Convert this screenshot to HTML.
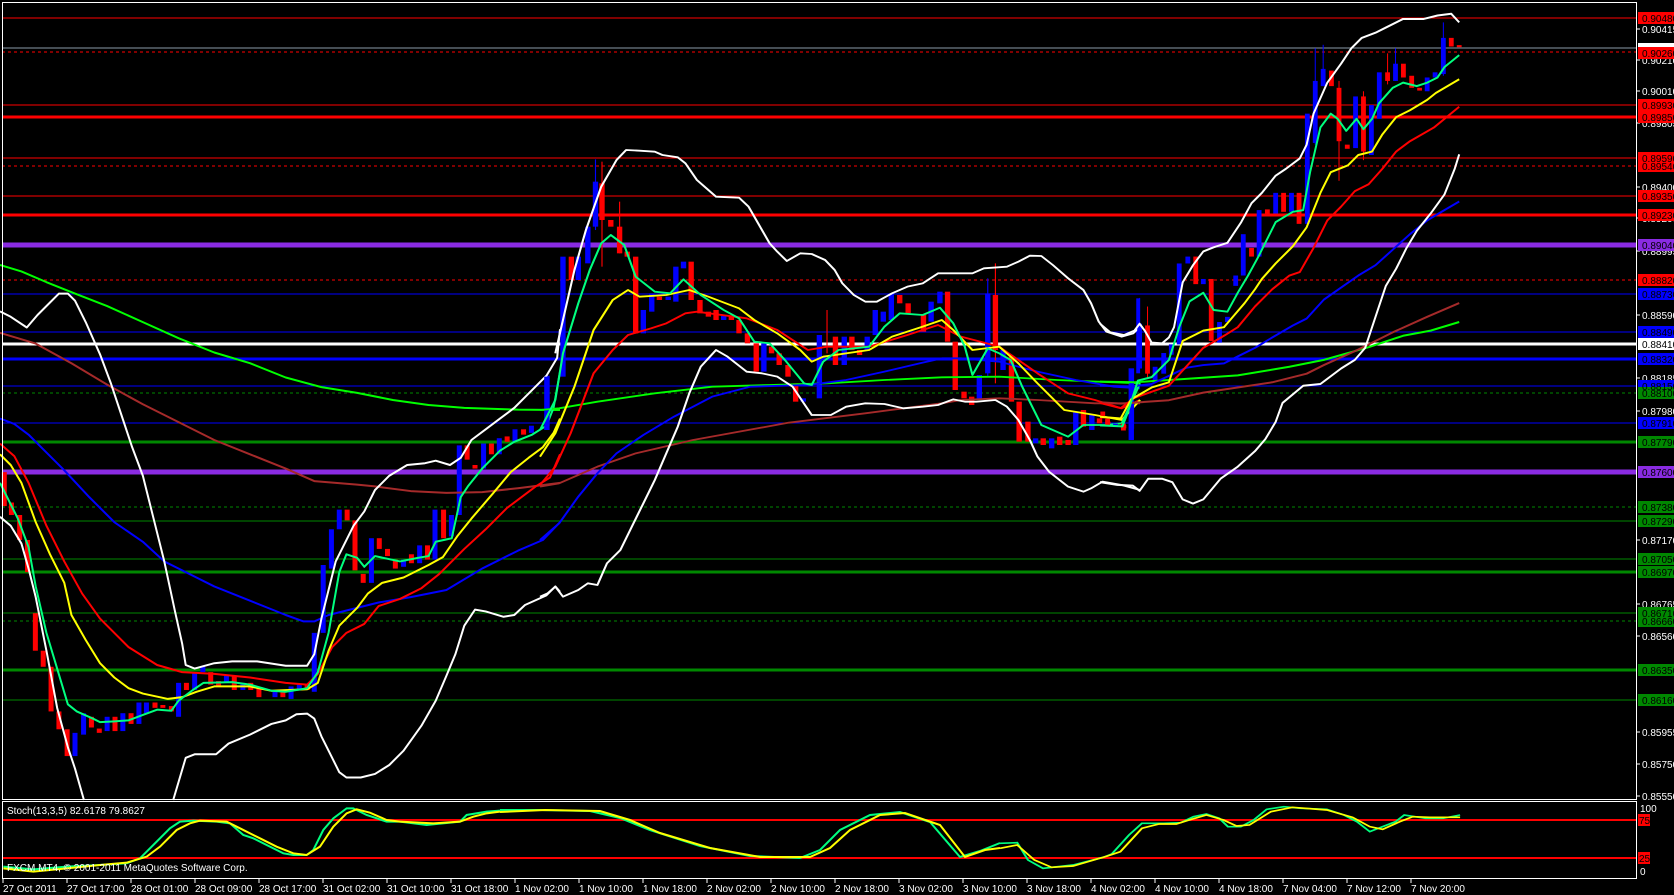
<!DOCTYPE html>
<html><head><meta charset="utf-8"><style>
html,body{margin:0;padding:0;background:#000;width:1674px;height:895px;overflow:hidden}
svg{position:absolute;left:0;top:0}
text{font-family:"Liberation Sans",sans-serif;font-size:10px}
</style></head><body>
<svg width="1674" height="895" viewBox="0 0 1674 895" xmlns="http://www.w3.org/2000/svg">
<rect width="1674" height="895" fill="#000"/>
<g shape-rendering="crispEdges">
<line x1="2" x2="1636" y1="18" y2="18" stroke="#f00" stroke-width="1"/>
<line x1="2" x2="1636" y1="48" y2="48" stroke="#8a9aa8" stroke-width="1"/>
<line x1="2" x2="1636" y1="52" y2="52" stroke="#f00" stroke-width="1" stroke-dasharray="3,3"/>
<line x1="2" x2="1636" y1="105" y2="105" stroke="#f00" stroke-width="1"/>
<line x1="2" x2="1636" y1="117" y2="117" stroke="#f00" stroke-width="3"/>
<line x1="2" x2="1636" y1="158" y2="158" stroke="#f00" stroke-width="1"/>
<line x1="2" x2="1636" y1="166" y2="166" stroke="#f00" stroke-width="1" stroke-dasharray="3,3"/>
<line x1="2" x2="1636" y1="196" y2="196" stroke="#f00" stroke-width="1"/>
<line x1="2" x2="1636" y1="215" y2="215" stroke="#f00" stroke-width="3"/>
<line x1="2" x2="1636" y1="245" y2="245" stroke="#8a2be2" stroke-width="5"/>
<line x1="2" x2="1636" y1="280" y2="280" stroke="#f00" stroke-width="1" stroke-dasharray="3,3"/>
<line x1="2" x2="1636" y1="294" y2="294" stroke="#00f" stroke-width="1"/>
<line x1="2" x2="1636" y1="332" y2="332" stroke="#00f" stroke-width="1"/>
<line x1="2" x2="1636" y1="344" y2="344" stroke="#fff" stroke-width="3"/>
<line x1="2" x2="1636" y1="359" y2="359" stroke="#00f" stroke-width="3"/>
<line x1="2" x2="1636" y1="386" y2="386" stroke="#00f" stroke-width="1"/>
<line x1="2" x2="1636" y1="393" y2="393" stroke="#080" stroke-width="1" stroke-dasharray="3,3"/>
<line x1="2" x2="1636" y1="423" y2="423" stroke="#00f" stroke-width="1"/>
<line x1="2" x2="1636" y1="442" y2="442" stroke="#080" stroke-width="3"/>
<line x1="2" x2="1636" y1="472" y2="472" stroke="#8a2be2" stroke-width="5"/>
<line x1="2" x2="1636" y1="507" y2="507" stroke="#080" stroke-width="1" stroke-dasharray="3,3"/>
<line x1="2" x2="1636" y1="521" y2="521" stroke="#080" stroke-width="1"/>
<line x1="2" x2="1636" y1="559" y2="559" stroke="#080" stroke-width="1"/>
<line x1="2" x2="1636" y1="572" y2="572" stroke="#080" stroke-width="3"/>
<line x1="2" x2="1636" y1="613" y2="613" stroke="#080" stroke-width="1"/>
<line x1="2" x2="1636" y1="621" y2="621" stroke="#080" stroke-width="1" stroke-dasharray="3,3"/>
<line x1="2" x2="1636" y1="670" y2="670" stroke="#080" stroke-width="3"/>
<line x1="2" x2="1636" y1="700" y2="700" stroke="#080" stroke-width="1"/>
</g>

<g fill="none" stroke-linejoin="round">
<!-- ZOOM4 region -->
<g transform="translate(0,240) scale(0.35714)">
<g>
<rect x="5" y="650" width="14" height="95" fill="#f00"/><rect x="25" y="735" width="14" height="35" fill="#f00"/><rect x="48" y="770" width="14" height="70" fill="#f00"/><rect x="70" y="840" width="14" height="90" fill="#f00"/><rect x="92" y="1045" width="14" height="105" fill="#f00"/><rect x="114" y="1150" width="14" height="45" fill="#f00"/><rect x="136" y="1195" width="14" height="125" fill="#f00"/><rect x="158" y="1320" width="14" height="50" fill="#f00"/><rect x="181" y="1370" width="14" height="75" fill="#f00"/><rect x="203" y="1380" width="14" height="65" fill="#00f"/><rect x="227" y="1325" width="14" height="60" fill="#00f"/><rect x="249" y="1335" width="14" height="30" fill="#f00"/><rect x="271" y="1368" width="14" height="12" fill="#f00"/><rect x="293" y="1335" width="14" height="40" fill="#00f"/><rect x="315" y="1335" width="14" height="40" fill="#f00"/><rect x="337" y="1325" width="14" height="50" fill="#00f"/><rect x="360" y="1325" width="14" height="30" fill="#f00"/><rect x="382" y="1295" width="14" height="60" fill="#00f"/><rect x="403" y="1295" width="14" height="30" fill="#00f"/><rect x="427" y="1295" width="14" height="15" fill="#f00"/><rect x="449" y="1302" width="14" height="8" fill="#f00"/><rect x="473" y="1305" width="14" height="15" fill="#f00"/><rect x="493" y="1240" width="14" height="95" fill="#00f"/><rect x="515" y="1240" width="14" height="20" fill="#f00"/><rect x="538" y="1210" width="14" height="50" fill="#00f"/><rect x="561" y="1195" width="14" height="15" fill="#00f"/><rect x="583" y="1210" width="14" height="35" fill="#f00"/><rect x="605" y="1235" width="14" height="15" fill="#f00"/><rect x="627" y="1220" width="14" height="20" fill="#00f"/><rect x="649" y="1220" width="14" height="40" fill="#f00"/><rect x="673" y="1240" width="14" height="20" fill="#00f"/><rect x="695" y="1240" width="14" height="20" fill="#f00"/><rect x="718" y="1255" width="14" height="25" fill="#f00"/><rect x="763" y="1265" width="14" height="15" fill="#00f"/><rect x="785" y="1260" width="14" height="20" fill="#f00"/><rect x="808" y="1250" width="14" height="35" fill="#00f"/><rect x="831" y="1245" width="14" height="15" fill="#00f"/><rect x="853" y="1245" width="14" height="15" fill="#f00"/><rect x="873" y="1100" width="14" height="165" fill="#00f"/><rect x="898" y="910" width="14" height="190" fill="#00f"/><rect x="921" y="810" width="14" height="110" fill="#00f"/><rect x="943" y="755" width="14" height="55" fill="#00f"/><rect x="965" y="755" width="14" height="30" fill="#f00"/><rect x="987" y="785" width="14" height="140" fill="#f00"/><rect x="1010" y="935" width="14" height="25" fill="#f00"/><rect x="1033" y="835" width="14" height="125" fill="#00f"/><rect x="1055" y="835" width="14" height="30" fill="#f00"/><rect x="1078" y="865" width="14" height="20" fill="#f00"/><rect x="1100" y="895" width="14" height="25" fill="#f00"/><rect x="1123" y="895" width="14" height="20" fill="#00f"/><rect x="1145" y="880" width="14" height="25" fill="#f00"/><rect x="1168" y="855" width="14" height="50" fill="#00f"/><rect x="1190" y="855" width="14" height="40" fill="#f00"/><rect x="1211" y="755" width="14" height="140" fill="#00f"/><rect x="1235" y="755" width="14" height="80" fill="#f00"/><rect x="1257" y="770" width="14" height="60" fill="#00f"/><rect x="1279" y="575" width="14" height="195" fill="#00f"/><rect x="1301" y="575" width="14" height="40" fill="#f00"/><rect x="1323" y="630" width="14" height="10" fill="#f00"/><rect x="1347" y="570" width="14" height="70" fill="#00f"/><rect x="1369" y="570" width="14" height="30" fill="#f00"/><rect x="1391" y="555" width="14" height="45" fill="#00f"/><rect x="1413" y="550" width="14" height="15" fill="#f00"/><rect x="1435" y="530" width="14" height="35" fill="#00f"/><rect x="1459" y="530" width="14" height="15" fill="#f00"/><rect x="1481" y="520" width="14" height="20" fill="#00f"/><rect x="1525" y="380" width="14" height="140" fill="#00f"/>
</g>
<g fill="none" stroke-width="5.6">
<polyline stroke="#0f0" points="0,70 60,88 130,118 210,150 300,185 400,230 500,275 600,315 700,345 800,385 900,412 1000,428 1100,448 1200,462 1300,470 1450,475 1568,476"/>
<polyline stroke="#a52a2a" points="0,260 50,275 100,290 200,345 300,405 400,460 500,510 600,560 700,600 800,640 880,675 1000,685 1050,690 1150,703 1250,708 1350,706 1450,695 1568,680"/>
<polyline stroke="#00f" points="0,500 40,515 80,545 120,585 180,645 250,720 320,790 400,845 460,900 520,930 600,970 700,1010 800,1050 850,1068 880,1068 920,1050 980,1035 1060,1015 1150,1000 1250,980 1350,920 1450,870 1520,840 1568,790"/>
<polyline stroke="#f00" points="0,570 40,605 80,680 130,800 180,900 230,990 280,1060 360,1140 440,1190 510,1210 600,1215 700,1225 800,1240 860,1245 890,1215 930,1140 970,1100 1020,1075 1060,1025 1120,1005 1180,975 1230,935 1300,865 1360,810 1420,750 1500,690 1540,665 1568,600"/>
<polyline stroke="#ff0" points="0,600 30,630 60,680 100,790 140,880 180,960 200,1050 240,1120 280,1185 320,1225 360,1255 400,1270 470,1285 510,1280 550,1265 600,1250 700,1250 760,1262 860,1258 890,1240 920,1150 950,1080 1000,1030 1030,990 1070,960 1130,945 1200,910 1240,888 1280,830 1320,780 1380,710 1430,650 1480,610 1520,580 1550,540 1568,500"/>
<polyline stroke="#00ff7f" points="0,680 20,720 50,780 80,860 100,970 130,1100 160,1200 190,1300 215,1320 260,1340 280,1350 320,1348 360,1345 400,1330 440,1315 480,1318 500,1290 540,1260 570,1240 650,1238 700,1245 760,1262 800,1265 860,1255 890,1210 920,1100 950,930 970,880 1000,890 1020,915 1050,885 1120,900 1170,890 1200,885 1220,845 1265,835 1290,720 1310,690 1350,640 1400,590 1440,565 1490,545 1530,520 1550,470 1568,370"/>
<polyline stroke="#fff" points="0,200 30,215 75,245 105,210 140,175 165,150 190,150 210,170 240,230 280,320 310,400 340,490 370,580 400,660 430,780 460,900 490,1040 510,1130 520,1190 545,1200 600,1185 650,1180 720,1180 800,1192 860,1192 880,1160 900,1060 940,900 990,800 1020,760 1050,700 1090,660 1140,630 1190,625 1220,618 1260,630 1290,610 1320,560 1360,530 1400,500 1440,470 1480,430 1530,380 1560,330 1568,250"/>
<polyline stroke="#fff" points="0,775 30,800 60,850 80,920 100,1000 130,1150 160,1310 190,1420 210,1480 235,1568"/>
<polyline stroke="#fff" points="485,1568 520,1450 545,1440 605,1440 640,1410 700,1385 760,1355 800,1345 830,1328 860,1326 880,1340 900,1390 930,1450 950,1490 970,1505 1010,1505 1050,1495 1090,1470 1130,1430 1180,1360 1220,1290 1250,1220 1275,1160 1300,1080 1330,1035 1360,1040 1410,1055 1440,1050 1470,1022 1530,995 1555,970 1568,985"/>
</g>
</g>

<!-- ZOOM5 region -->
<g transform="translate(540,120) scale(0.3827,0.33333)">
<g>
<rect x="11" y="770" width="14" height="160" fill="#00f"/><rect x="53" y="410" width="14" height="360" fill="#00f"/><rect x="75" y="410" width="14" height="70" fill="#f00"/><rect x="93" y="410" width="14" height="70" fill="#00f"/><rect x="118" y="320" width="14" height="110" fill="#00f"/><rect x="138" y="185" width="14" height="135" fill="#00f"/><rect x="155" y="190" width="14" height="110" fill="#f00"/><rect x="178" y="300" width="14" height="20" fill="#f00"/><rect x="201" y="320" width="14" height="80" fill="#f00"/><rect x="221" y="395" width="14" height="15" fill="#f00"/><rect x="243" y="410" width="14" height="230" fill="#f00"/><rect x="263" y="570" width="14" height="70" fill="#00f"/><rect x="285" y="520" width="14" height="55" fill="#00f"/><rect x="305" y="530" width="14" height="10" fill="#f00"/><rect x="328" y="530" width="14" height="10" fill="#00f"/><rect x="348" y="440" width="14" height="105" fill="#00f"/><rect x="368" y="425" width="14" height="20" fill="#00f"/><rect x="388" y="425" width="14" height="115" fill="#f00"/><rect x="411" y="540" width="14" height="40" fill="#f00"/><rect x="433" y="575" width="14" height="15" fill="#f00"/><rect x="453" y="570" width="14" height="30" fill="#f00"/><rect x="473" y="588" width="14" height="12" fill="#00f"/><rect x="493" y="590" width="14" height="10" fill="#f00"/><rect x="513" y="600" width="14" height="40" fill="#f00"/><rect x="535" y="640" width="14" height="30" fill="#f00"/><rect x="558" y="670" width="14" height="85" fill="#f00"/><rect x="578" y="670" width="14" height="85" fill="#00f"/><rect x="598" y="680" width="14" height="20" fill="#f00"/><rect x="618" y="700" width="14" height="35" fill="#f00"/><rect x="641" y="735" width="14" height="35" fill="#f00"/><rect x="661" y="790" width="14" height="55" fill="#f00"/><rect x="681" y="835" width="14" height="10" fill="#00f"/><rect x="723" y="645" width="14" height="190" fill="#00f"/><rect x="765" y="650" width="14" height="85" fill="#f00"/><rect x="788" y="650" width="14" height="85" fill="#00f"/><rect x="808" y="650" width="14" height="40" fill="#f00"/><rect x="828" y="690" width="14" height="15" fill="#f00"/><rect x="848" y="650" width="14" height="40" fill="#00f"/><rect x="869" y="570" width="14" height="75" fill="#00f"/><rect x="890" y="575" width="14" height="30" fill="#00f"/><rect x="911" y="520" width="14" height="80" fill="#00f"/><rect x="933" y="525" width="14" height="25" fill="#f00"/><rect x="955" y="550" width="14" height="30" fill="#f00"/><rect x="995" y="585" width="14" height="50" fill="#f00"/><rect x="1015" y="545" width="14" height="60" fill="#00f"/><rect x="1038" y="515" width="14" height="35" fill="#00f"/><rect x="1058" y="515" width="14" height="150" fill="#f00"/><rect x="1078" y="665" width="14" height="145" fill="#f00"/><rect x="1101" y="815" width="14" height="20" fill="#f00"/><rect x="1121" y="830" width="14" height="25" fill="#f00"/><rect x="1141" y="765" width="14" height="75" fill="#00f"/><rect x="1163" y="520" width="14" height="240" fill="#00f"/><rect x="1183" y="525" width="14" height="165" fill="#f00"/><rect x="1203" y="690" width="14" height="60" fill="#00f"/><rect x="1225" y="710" width="14" height="135" fill="#f00"/><rect x="1245" y="845" width="14" height="120" fill="#f00"/><rect x="1268" y="905" width="14" height="60" fill="#f00"/><rect x="1288" y="955" width="14" height="15" fill="#00f"/><rect x="1308" y="955" width="14" height="20" fill="#f00"/><rect x="1330" y="955" width="14" height="30" fill="#00f"/><rect x="1351" y="950" width="14" height="25" fill="#f00"/><rect x="1373" y="960" width="14" height="15" fill="#f00"/><rect x="1393" y="875" width="14" height="100" fill="#00f"/><rect x="1413" y="870" width="14" height="50" fill="#f00"/><rect x="1435" y="885" width="14" height="45" fill="#00f"/><rect x="1455" y="895" width="14" height="15" fill="#f00"/><rect x="1477" y="905" width="14" height="10" fill="#f00"/><rect x="1518" y="915" width="14" height="10" fill="#f00"/><rect x="1538" y="745" width="14" height="215" fill="#00f"/><rect x="1558" y="535" width="10" height="225" fill="#00f"/>
<g stroke-width="3">
<line x1="145" y1="118" x2="145" y2="330" stroke="#00f"/><line x1="162" y1="125" x2="162" y2="440" stroke="#f00"/><line x1="208" y1="245" x2="208" y2="400" stroke="#f00"/><line x1="1190" y1="430" x2="1190" y2="790" stroke="#f00"/><line x1="1170" y1="475" x2="1170" y2="770" stroke="#00f"/><line x1="750" y1="570" x2="750" y2="700" stroke="#f00"/>
</g>
</g>
<g fill="none" stroke-width="5.5">
<polyline stroke="#0f0" points="0,870 50,865 150,845 300,820 450,800 600,795 750,790 900,780 1050,772 1200,770 1350,780 1568,790"/>
<polyline stroke="#a52a2a" points="0,1100 50,1090 150,1040 250,1000 400,960 650,908 850,880 950,865 1050,850 1100,840 1200,835 1300,840 1450,850 1568,850"/>
<polyline stroke="#00f" points="0,1260 50,1210 100,1130 150,1060 200,1000 270,945 350,890 450,830 550,800 700,795 800,780 900,755 1000,728 1050,715 1100,715 1200,725 1300,755 1400,780 1500,800 1568,805"/>
<polyline stroke="#f00" points="0,1095 40,1040 80,940 140,760 190,690 230,645 290,625 330,610 380,580 410,575 540,595 620,630 700,690 750,680 860,680 960,645 1040,615 1100,650 1200,680 1250,720 1300,760 1380,820 1450,840 1520,865 1568,840"/>
<polyline stroke="#ff0" points="0,1010 40,940 90,800 140,630 190,540 230,510 260,530 330,525 390,510 440,530 520,565 560,600 620,640 680,690 710,725 740,710 860,690 920,650 1000,620 1050,600 1080,630 1130,690 1200,680 1250,730 1300,790 1370,870 1450,885 1520,900 1568,840"/>
<polyline stroke="#00ff7f" points="0,930 40,840 60,700 100,550 130,450 160,370 185,345 220,375 250,470 300,515 340,520 375,478 420,525 480,570 520,595 560,665 600,670 640,720 690,790 710,795 740,725 780,690 860,680 900,620 940,580 1000,585 1045,563 1080,610 1110,680 1130,765 1170,685 1200,700 1230,720 1260,800 1310,915 1380,950 1420,915 1480,915 1520,910 1568,790"/>
<polyline stroke="#fff" points="40,700 60,600 90,450 120,330 160,200 200,120 225,90 260,92 300,95 320,105 360,112 380,130 410,180 430,200 460,230 520,233 545,260 570,310 600,370 620,395 645,423 680,400 710,402 745,420 770,450 790,490 820,525 850,545 880,545 920,520 960,500 1000,490 1040,460 1080,460 1130,460 1160,445 1220,440 1250,425 1280,407 1310,408 1340,435 1380,475 1420,510 1440,550 1460,605 1480,635 1520,650 1550,640 1568,620"/>
<polyline stroke="#fff" points="0,1430 20,1420 40,1400 60,1430 100,1410 125,1390 150,1395 175,1330 210,1290 240,1220 270,1150 300,1080 330,1000 360,920 390,820 420,740 460,690 490,710 540,755 580,760 620,770 660,800 710,885 760,885 800,860 850,850 900,852 950,865 1000,860 1040,855 1080,838 1110,845 1140,845 1190,840 1220,860 1250,900 1280,960 1300,1010 1330,1055 1380,1100 1420,1115 1440,1105 1470,1085 1520,1095 1568,1110"/>
</g>
</g>

<!-- ZOOM6 region -->
<g transform="translate(1100,0) scale(0.3444)">
<g>
<rect x="1" y="1195" width="14" height="20" fill="#f00"/><rect x="15" y="1215" width="14" height="20" fill="#f00"/><rect x="38" y="1230" width="14" height="10" fill="#00f"/><rect x="61" y="1230" width="14" height="20" fill="#f00"/><rect x="85" y="1070" width="14" height="175" fill="#00f"/><rect x="108" y="940" width="14" height="130" fill="#00f"/><rect x="131" y="945" width="14" height="140" fill="#f00"/><rect x="153" y="1065" width="14" height="45" fill="#00f"/><rect x="178" y="1025" width="14" height="60" fill="#00f"/><rect x="200" y="1000" width="14" height="30" fill="#00f"/><rect x="223" y="765" width="14" height="235" fill="#00f"/><rect x="248" y="745" width="14" height="20" fill="#00f"/><rect x="271" y="745" width="14" height="80" fill="#f00"/><rect x="293" y="810" width="14" height="15" fill="#00f"/><rect x="316" y="810" width="14" height="180" fill="#f00"/><rect x="340" y="935" width="14" height="60" fill="#00f"/><rect x="363" y="920" width="14" height="15" fill="#00f"/><rect x="387" y="800" width="14" height="30" fill="#00f"/><rect x="409" y="680" width="14" height="120" fill="#00f"/><rect x="433" y="720" width="14" height="25" fill="#f00"/><rect x="455" y="610" width="14" height="135" fill="#00f"/><rect x="479" y="608" width="14" height="12" fill="#f00"/><rect x="503" y="560" width="14" height="60" fill="#00f"/><rect x="526" y="560" width="14" height="55" fill="#f00"/><rect x="549" y="560" width="14" height="55" fill="#00f"/><rect x="571" y="560" width="14" height="90" fill="#f00"/><rect x="595" y="330" width="14" height="320" fill="#00f"/><rect x="618" y="235" width="14" height="180" fill="#00f"/><rect x="641" y="200" width="14" height="50" fill="#00f"/><rect x="665" y="205" width="14" height="45" fill="#f00"/><rect x="687" y="255" width="14" height="155" fill="#f00"/><rect x="711" y="420" width="14" height="12" fill="#f00"/><rect x="735" y="280" width="14" height="150" fill="#00f"/><rect x="758" y="280" width="14" height="160" fill="#f00"/><rect x="781" y="305" width="14" height="145" fill="#00f"/><rect x="804" y="210" width="14" height="135" fill="#00f"/><rect x="828" y="210" width="14" height="25" fill="#f00"/><rect x="851" y="185" width="14" height="50" fill="#00f"/><rect x="874" y="185" width="14" height="40" fill="#f00"/><rect x="898" y="220" width="14" height="35" fill="#f00"/><rect x="921" y="255" width="14" height="8" fill="#f00"/><rect x="943" y="225" width="14" height="40" fill="#00f"/><rect x="966" y="210" width="14" height="15" fill="#00f"/><rect x="990" y="110" width="14" height="105" fill="#00f"/><rect x="1013" y="110" width="14" height="25" fill="#f00"/><rect x="1036" y="131" width="14" height="6" fill="#f00"/>
<g stroke-width="3">
<line x1="997" y1="65" x2="997" y2="220" stroke="#00f"/><line x1="625" y1="140" x2="625" y2="420" stroke="#00f"/><line x1="648" y1="130" x2="648" y2="250" stroke="#00f"/><line x1="694" y1="235" x2="694" y2="525" stroke="#f00"/><line x1="765" y1="265" x2="765" y2="465" stroke="#f00"/><line x1="835" y1="155" x2="835" y2="245" stroke="#f00"/><line x1="858" y1="140" x2="858" y2="235" stroke="#00f"/><line x1="115" y1="865" x2="115" y2="1070" stroke="#00f"/><line x1="138" y1="890" x2="138" y2="1100" stroke="#f00"/>
</g>
</g>
<g fill="none" stroke-width="5.8">
<polyline stroke="#0f0" points="0,1108 100,1110 250,1100 400,1090 550,1065 650,1045 780,1008 880,975 960,960 1043,935"/>
<polyline stroke="#a52a2a" points="0,1168 60,1172 200,1162 300,1140 500,1110 600,1085 650,1060 750,1015 850,965 950,920 1043,880"/>
<polyline stroke="#00f" points="0,1120 90,1122 150,1115 250,1068 300,1060 360,1055 400,1035 450,1010 500,980 560,945 600,925 650,870 700,835 750,800 800,770 850,725 900,680 950,640 1000,610 1043,585"/>
<polyline stroke="#f00" points="0,1170 60,1185 100,1155 200,1120 300,1010 360,975 400,950 450,890 500,840 550,800 580,790 620,720 660,640 700,600 740,555 780,535 820,490 860,440 900,410 970,370 1043,310"/>
<polyline stroke="#ff0" points="0,1210 60,1215 90,1160 150,1125 200,1110 240,990 300,960 360,950 390,915 420,880 450,840 470,810 510,765 560,715 600,660 640,560 670,500 720,480 750,450 790,440 820,390 860,340 900,320 950,290 975,270 1043,230"/>
<polyline stroke="#00ff7f" points="0,1235 65,1238 80,1200 110,1105 150,1095 200,1045 230,950 260,875 300,850 330,900 370,905 400,850 430,800 460,745 510,645 560,615 590,610 610,500 640,370 670,330 690,345 715,380 745,345 765,375 790,345 810,300 850,255 880,240 920,250 950,240 980,225 1000,195 1043,160"/>
<polyline stroke="#fff" points="0,940 30,965 70,973 100,960 115,940 130,960 150,995 180,997 200,980 215,950 240,820 270,770 300,730 330,718 370,705 410,645 440,590 470,560 510,510 540,490 580,460 600,420 620,330 660,240 700,185 730,140 760,110 800,95 830,80 880,55 940,55 980,45 1020,40 1043,65"/>
<polyline stroke="#fff" points="0,1400 50,1408 95,1410 115,1425 140,1390 180,1390 210,1400 240,1450 270,1462 300,1450 350,1390 400,1355 450,1310 480,1275 510,1225 530,1170 590,1120 640,1115 700,1070 740,1045 770,1010 800,920 830,830 860,780 890,720 920,670 960,620 1000,565 1030,490 1043,448"/>
</g>
</g>
</g>

<g fill="none" stroke="#fff" stroke-width="1" shape-rendering="crispEdges">
<rect x="2.5" y="2.5" width="1634" height="797"/>
<rect x="2.5" y="801.5" width="1634" height="77"/>
</g>

<g shape-rendering="crispEdges">
<line x1="3" x2="1636" y1="820" y2="820" stroke="#f00" stroke-width="2"/>
<line x1="3" x2="1636" y1="858" y2="858" stroke="#f00" stroke-width="2"/>
</g>
<g fill="none" stroke-width="2">
<g transform="translate(0,740) scale(0.3333)">
<polyline stroke="#00ff7f" stroke-width="6" points="10,380 100,388 200,380 300,375 380,370 420,355 460,315 510,265 540,245 580,242 650,245 690,250 730,285 760,295 800,315 850,340 880,345 920,345 940,330 970,270 1000,235 1040,205 1060,205 1100,225 1160,245 1200,245 1280,255 1380,245 1400,225 1460,215 1500,212"/>
<polyline stroke="#ff0" stroke-width="6" points="10,385 100,395 200,385 300,375 380,368 440,350 480,320 530,270 570,250 600,242 680,245 720,265 780,295 830,320 880,340 920,345 960,320 1000,260 1040,220 1070,208 1110,218 1160,240 1200,245 1300,250 1380,245 1420,230 1460,220 1500,215"/>
</g>
<polyline stroke="#00ff7f" points="500,810 540,810 590,811 620,818 650,830 700,846 750,856 800,858 820,850 840,830 870,815 900,812 930,822 960,857 980,851 1000,843"/>
<polyline stroke="#ff0" points="500,812 545,810 600,811 630,820 660,833 710,848 760,857 810,857 830,848 850,830 880,815 905,813 940,825 965,857 985,850 1000,848"/>
<g transform="translate(1000,780) scale(0.43,0.3333)">
<polyline stroke="#00ff7f" stroke-width="5" points="0,190 40,188 65,240 100,265 170,255 240,232 260,222 300,165 330,130 380,130 420,128 450,110 480,102 510,115 530,140 560,140 590,120 620,88 660,80 700,85 760,88 800,105 830,125 860,155 890,140 920,125 940,105 990,115 1030,115 1070,105"/>
<polyline stroke="#ff0" stroke-width="5" points="0,205 40,195 80,240 120,262 170,258 250,228 280,215 330,145 370,132 410,132 440,120 480,105 520,120 550,138 580,135 630,95 680,82 760,90 820,112 860,140 890,148 930,125 960,110 1000,112 1070,112"/>
</g>
</g>
<text x="7" y="814" fill="#fff">Stoch(13,3,5) 82.6178 79.8627</text>
<text x="7" y="871" fill="#fff">FXCM MT4,  © 2001-2011 MetaQuotes Software Corp.</text>

<g fill="#fff">
<g stroke="#fff" shape-rendering="crispEdges">
<line x1="1637" x2="1640" y1="29" y2="29"/><line x1="1637" x2="1640" y1="60" y2="60"/><line x1="1637" x2="1640" y1="91" y2="91"/><line x1="1637" x2="1640" y1="123" y2="123"/><line x1="1637" x2="1640" y1="187" y2="187"/><line x1="1637" x2="1640" y1="218" y2="218"/><line x1="1637" x2="1640" y1="251" y2="251"/><line x1="1637" x2="1640" y1="315" y2="315"/><line x1="1637" x2="1640" y1="378" y2="378"/><line x1="1637" x2="1640" y1="411" y2="411"/><line x1="1637" x2="1640" y1="540" y2="540"/><line x1="1637" x2="1640" y1="604" y2="604"/><line x1="1637" x2="1640" y1="636" y2="636"/><line x1="1637" x2="1640" y1="732" y2="732"/><line x1="1637" x2="1640" y1="764" y2="764"/><line x1="1637" x2="1640" y1="796" y2="796"/>
</g>
<text x="1642" y="33">0.90415</text><text x="1642" y="64">0.90210</text><text x="1642" y="95">0.90010</text><text x="1642" y="127">0.89805</text><text x="1642" y="191">0.89400</text><text x="1642" y="222">0.89200</text><text x="1642" y="255">0.88995</text><text x="1642" y="319">0.88590</text><text x="1642" y="382">0.88185</text><text x="1642" y="415">0.87980</text><text x="1642" y="544">0.87170</text><text x="1642" y="608">0.86765</text><text x="1642" y="640">0.86560</text><text x="1642" y="736">0.85955</text><text x="1642" y="768">0.85750</text><text x="1642" y="800">0.85550</text>
<text x="1640" y="812">100</text><text x="1640" y="875">0</text>
</g>
<g>
<rect x="1638" y="12" width="36" height="12" fill="#f00"/><rect x="1638" y="43" width="36" height="5" fill="#fff"/><rect x="1638" y="47" width="36" height="12" fill="#f00"/><rect x="1638" y="99" width="36" height="12" fill="#f00"/><rect x="1638" y="111" width="36" height="12" fill="#f00"/><rect x="1638" y="152" width="36" height="12" fill="#f00"/><rect x="1638" y="160" width="36" height="12" fill="#f00"/><rect x="1638" y="190" width="36" height="12" fill="#f00"/><rect x="1638" y="209" width="36" height="12" fill="#f00"/><rect x="1638" y="239" width="36" height="12" fill="#8a2be2"/><rect x="1638" y="274" width="36" height="12" fill="#f00"/><rect x="1638" y="288" width="36" height="12" fill="#00f"/><rect x="1638" y="326" width="36" height="12" fill="#00f"/><rect x="1638" y="338" width="36" height="12" fill="#fff"/><rect x="1638" y="353" width="36" height="12" fill="#00f"/><rect x="1638" y="380" width="36" height="10" fill="#00f"/><rect x="1638" y="387" width="36" height="12" fill="#080"/><rect x="1638" y="417" width="36" height="12" fill="#00f"/><rect x="1638" y="436" width="36" height="12" fill="#080"/><rect x="1638" y="466" width="36" height="12" fill="#8a2be2"/><rect x="1638" y="501" width="36" height="12" fill="#080"/><rect x="1638" y="515" width="36" height="12" fill="#080"/><rect x="1638" y="553" width="36" height="12" fill="#080"/><rect x="1638" y="566" width="36" height="12" fill="#080"/><rect x="1638" y="607" width="36" height="12" fill="#080"/><rect x="1638" y="615" width="36" height="12" fill="#080"/><rect x="1638" y="664" width="36" height="12" fill="#080"/><rect x="1638" y="694" width="36" height="12" fill="#080"/>
<rect x="1638" y="814" width="12" height="12" fill="#f00"/><rect x="1638" y="852" width="12" height="12" fill="#f00"/>
</g>
<g fill="#000">
<text x="1642" y="22">0.90480</text><text x="1642" y="57">0.90260</text><text x="1642" y="109">0.89930</text><text x="1642" y="121">0.89850</text><text x="1642" y="162">0.89590</text><text x="1642" y="170">0.89540</text><text x="1642" y="200">0.89350</text><text x="1642" y="219">0.89230</text><text x="1642" y="249">0.89040</text><text x="1642" y="284">0.88820</text><text x="1642" y="298">0.88730</text><text x="1642" y="336">0.88490</text><text x="1642" y="348">0.88410</text><text x="1642" y="363">0.88320</text><text x="1642" y="390">0.88150</text><text x="1642" y="397">0.88100</text><text x="1642" y="427">0.87910</text><text x="1642" y="446">0.87790</text><text x="1642" y="476">0.87600</text><text x="1642" y="511">0.87380</text><text x="1642" y="525">0.87290</text><text x="1642" y="563">0.87050</text><text x="1642" y="576">0.86970</text><text x="1642" y="617">0.86710</text><text x="1642" y="625">0.86660</text><text x="1642" y="674">0.86350</text><text x="1642" y="704">0.86160</text>
<text x="1639" y="824">75</text><text x="1639" y="862">25</text>
</g>

<g stroke="#fff" shape-rendering="crispEdges">
<line x1="3" x2="3" y1="879" y2="883"/><line x1="67" x2="67" y1="879" y2="883"/><line x1="131" x2="131" y1="879" y2="883"/><line x1="195" x2="195" y1="879" y2="883"/><line x1="259" x2="259" y1="879" y2="883"/><line x1="323" x2="323" y1="879" y2="883"/><line x1="387" x2="387" y1="879" y2="883"/><line x1="451" x2="451" y1="879" y2="883"/><line x1="515" x2="515" y1="879" y2="883"/><line x1="579" x2="579" y1="879" y2="883"/><line x1="643" x2="643" y1="879" y2="883"/><line x1="707" x2="707" y1="879" y2="883"/><line x1="771" x2="771" y1="879" y2="883"/><line x1="835" x2="835" y1="879" y2="883"/><line x1="899" x2="899" y1="879" y2="883"/><line x1="963" x2="963" y1="879" y2="883"/><line x1="1027" x2="1027" y1="879" y2="883"/><line x1="1091" x2="1091" y1="879" y2="883"/><line x1="1155" x2="1155" y1="879" y2="883"/><line x1="1219" x2="1219" y1="879" y2="883"/><line x1="1283" x2="1283" y1="879" y2="883"/><line x1="1347" x2="1347" y1="879" y2="883"/><line x1="1411" x2="1411" y1="879" y2="883"/>
</g>
<g fill="#fff">
<text x="3" y="892">27 Oct 2011</text><text x="67" y="892">27 Oct 17:00</text><text x="131" y="892">28 Oct 01:00</text><text x="195" y="892">28 Oct 09:00</text><text x="259" y="892">28 Oct 17:00</text><text x="323" y="892">31 Oct 02:00</text><text x="387" y="892">31 Oct 10:00</text><text x="451" y="892">31 Oct 18:00</text><text x="515" y="892">1 Nov 02:00</text><text x="579" y="892">1 Nov 10:00</text><text x="643" y="892">1 Nov 18:00</text><text x="707" y="892">2 Nov 02:00</text><text x="771" y="892">2 Nov 10:00</text><text x="835" y="892">2 Nov 18:00</text><text x="899" y="892">3 Nov 02:00</text><text x="963" y="892">3 Nov 10:00</text><text x="1027" y="892">3 Nov 18:00</text><text x="1091" y="892">4 Nov 02:00</text><text x="1155" y="892">4 Nov 10:00</text><text x="1219" y="892">4 Nov 18:00</text><text x="1283" y="892">7 Nov 04:00</text><text x="1347" y="892">7 Nov 12:00</text><text x="1411" y="892">7 Nov 20:00</text>
</g>
</svg>
</body></html>
